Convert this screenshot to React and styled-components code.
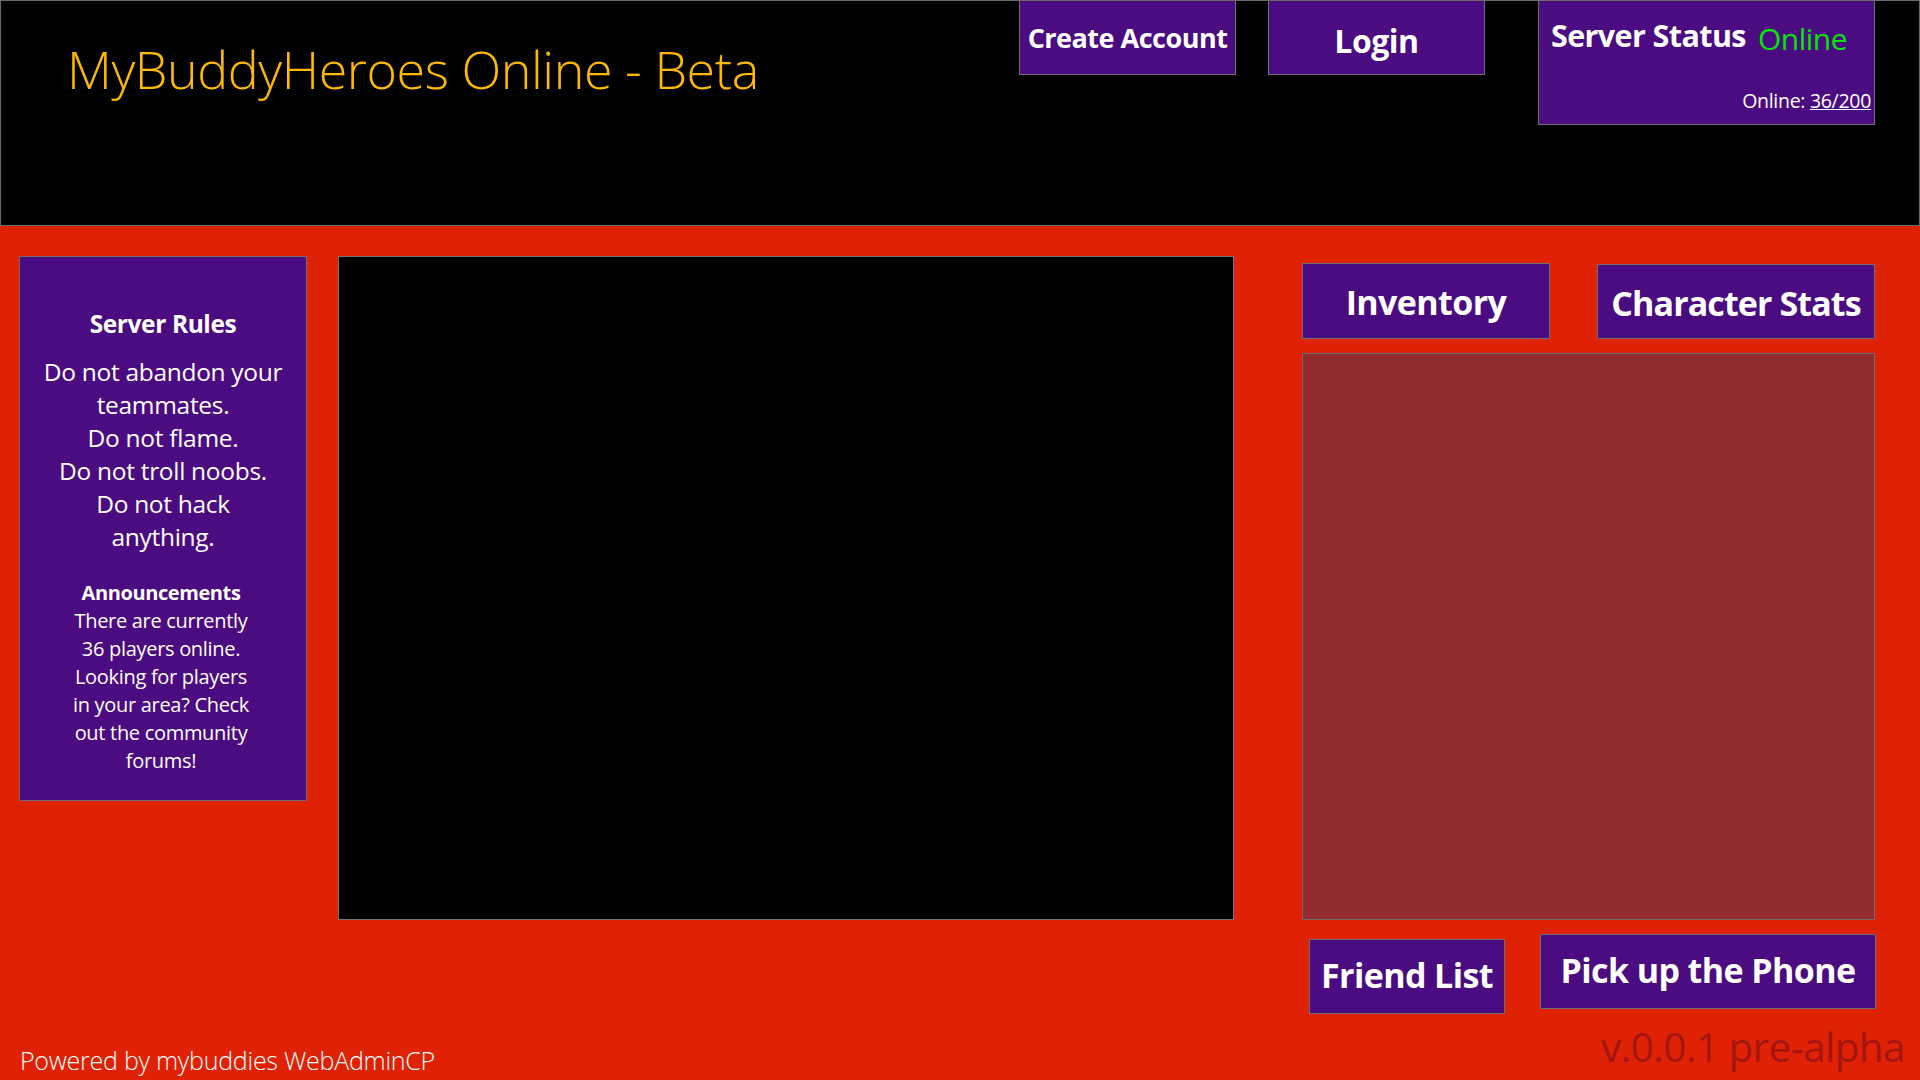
import React from "react";
import styled, { createGlobalStyle } from "styled-components";

const GlobalStyle = createGlobalStyle`
  html, body {
    margin: 0;
    padding: 0;
  }
  body {
    background: #df2205;
    font-family: "Open Sans", "Noto Sans", sans-serif;
    overflow: hidden;
  }
  * {
    box-sizing: border-box;
  }
`;

const Page = styled.div`
  width: 1920px;
  height: 1080px;
  display: flex;
  flex-direction: column;
`;

const Header = styled.header`
  height: 226px;
  flex-shrink: 0;
  background: #000;
  border: 1px solid #6b6b6b;
  display: flex;
  align-items: flex-start;
`;

const Title = styled.h1`
  margin: 37px auto 0 66px;
  font-size: 52px;
  font-weight: 300;
  line-height: 1.2;
  color: #ffb900;
  letter-spacing: -0.45px;
  white-space: nowrap;
`;

const PurpleBox = styled.button`
  font-family: inherit;
  background: #4a0c80;
  color: #fff;
  border: 1px solid #6e6e6e;
  padding: 0;
  display: flex;
  align-items: center;
  justify-content: center;
  font-weight: 700;
  white-space: nowrap;
  flex-shrink: 0;
  cursor: pointer;
`;

const NavButton = styled(PurpleBox)`
  width: 217px;
  height: 74px;
  border-top: none;
  margin-left: ${(p) => p.$gap}px;
  font-size: ${(p) => p.$size}px;
  letter-spacing: -0.5px;
  padding-top: ${(p) => p.$nudge}px;
`;

const StatusBox = styled.div`
  width: 337px;
  height: 124px;
  margin: 0 44px 0 53px;
  flex-shrink: 0;
  background: #4a0c80;
  border: 1px solid #6e6e6e;
  border-top: none;
  color: #fff;
  display: flex;
  flex-direction: column;
  justify-content: space-between;
  padding: 13px 3px 10px 12px;
`;

const StatusTitle = styled.div`
  display: flex;
  align-items: baseline;
  gap: 12px;
  font-size: 30.5px;
  font-weight: 700;
  letter-spacing: -0.6px;
  white-space: nowrap;
`;

const OnlineTag = styled.span`
  color: #06e606;
  font-weight: 400;
  font-size: 30px;
  letter-spacing: -0.5px;
  position: relative;
  top: 3px;
`;

const PlayerCount = styled.div`
  align-self: flex-end;
  font-size: 19.5px;
  letter-spacing: -0.3px;
  a {
    color: #fff;
    text-decoration: underline;
  }
`;

const Body = styled.main`
  flex: 1;
  display: flex;
  flex-direction: column;
`;

const ContentRow = styled.div`
  display: flex;
  align-items: flex-start;
  padding: 30px 0 0 19px;
`;

const SidePanel = styled.aside`
  width: 288px;
  height: 545px;
  flex-shrink: 0;
  background: #4a0c80;
  border: 1px solid #6e6e6e;
  color: #fff;
  text-align: center;
  padding-top: 52px;
  white-space: nowrap;
`;

const PanelHeading = styled.h3`
  margin: 0;
  font-size: ${(p) => p.$size}px;
  font-weight: 700;
  line-height: 1.25;
  letter-spacing: -0.4px;
`;

const RulesText = styled.p`
  margin: 15px 0 0;
  font-size: 24.5px;
  line-height: 33px;
  letter-spacing: -0.3px;
`;

const AnnouncementBlock = styled.div`
  margin-top: 27px;
  margin-right: 4px;
`;

const AnnouncementText = styled.p`
  margin: 2px 0 0;
  font-size: 20px;
  line-height: 28px;
  letter-spacing: -0.3px;
`;

const GameFrame = styled.section`
  width: 896px;
  height: 664px;
  flex-shrink: 0;
  margin-left: 31px;
  background: #000;
  border: 1px solid #767676;
`;

const RightColumn = styled.div`
  width: 573px;
  flex-shrink: 0;
  margin-left: 68px;
  display: flex;
  flex-direction: column;
`;

const TabRow = styled.div`
  display: flex;
  justify-content: space-between;
  align-items: flex-start;
  padding-top: 7px;
`;

const BigButton = styled(PurpleBox)`
  width: ${(p) => p.$w}px;
  height: ${(p) => p.$h || 75}px;
  margin-top: ${(p) => p.$top || 0}px;
  padding-top: ${(p) => p.$nudge || 0}px;
  padding-bottom: ${(p) => (p.$nudge < 0 ? -p.$nudge : 0)}px;
  font-size: 34px;
  letter-spacing: ${(p) => p.$track || -0.6}px;
`;

const InfoPanel = styled.div`
  height: 567px;
  margin-top: 14px;
  background: #922d2f;
  border: 1px solid #6e6e6e;
`;

const BottomRow = styled.div`
  display: flex;
  align-items: flex-start;
  padding-left: 7px;
  margin-top: 14px;
  gap: 35px;
`;

const Footer = styled.footer`
  margin-top: auto;
  display: flex;
  justify-content: space-between;
  align-items: flex-end;
  padding: 0 15px 5px 20px;
  white-space: nowrap;
`;

const PoweredBy = styled.div`
  color: #fff;
  font-size: 25px;
  font-weight: 300;
  letter-spacing: -0.25px;
  line-height: 1.2;
`;

const Version = styled.div`
  color: #a3150e;
  font-size: 40.5px;
  font-weight: 400;
  letter-spacing: -0.6px;
  line-height: 1.2;
  margin-bottom: 3px;
`;

export default function App() {
  return (
    <Page>
      <GlobalStyle />
      <Header>
        <Title>MyBuddyHeroes Online - Beta</Title>
        <NavButton $gap={0} $size={27} $nudge={0}>
          Create Account
        </NavButton>
        <NavButton $gap={32} $size={32} $nudge={6}>
          Login
        </NavButton>
        <StatusBox>
          <StatusTitle>
            Server Status <OnlineTag>Online</OnlineTag>
          </StatusTitle>
          <PlayerCount>
            Online: <a href="#players">36/200</a>
          </PlayerCount>
        </StatusBox>
      </Header>

      <Body>
        <ContentRow>
          <SidePanel>
            <PanelHeading $size={24.5}>Server Rules</PanelHeading>
            <RulesText>
              Do not abandon your
              <br />
              teammates.
              <br />
              Do not flame.
              <br />
              Do not troll noobs.
              <br />
              Do not hack
              <br />
              anything.
            </RulesText>
            <AnnouncementBlock>
              <PanelHeading $size={20}>Announcements</PanelHeading>
              <AnnouncementText>
                There are currently
                <br />
                36 players online.
                <br />
                Looking for players
                <br />
                in your area? Check
                <br />
                out the community
                <br />
                forums!
              </AnnouncementText>
            </AnnouncementBlock>
          </SidePanel>

          <GameFrame />

          <RightColumn>
            <TabRow>
              <BigButton $w={248} $h={76} $nudge={2}>
                Inventory
              </BigButton>
              <BigButton $w={278} $top={1} $nudge={2} $track={-0.9}>
                Character Stats
              </BigButton>
            </TabRow>
            <InfoPanel />
            <BottomRow>
              <BigButton $w={196} $top={5} $nudge={-3}>
                Friend List
              </BigButton>
              <BigButton $w={336} $nudge={-4}>
                Pick up the Phone
              </BigButton>
            </BottomRow>
          </RightColumn>
        </ContentRow>

        <Footer>
          <PoweredBy>Powered by mybuddies WebAdminCP</PoweredBy>
          <Version>v.0.0.1 pre-alpha</Version>
        </Footer>
      </Body>
    </Page>
  );
}
